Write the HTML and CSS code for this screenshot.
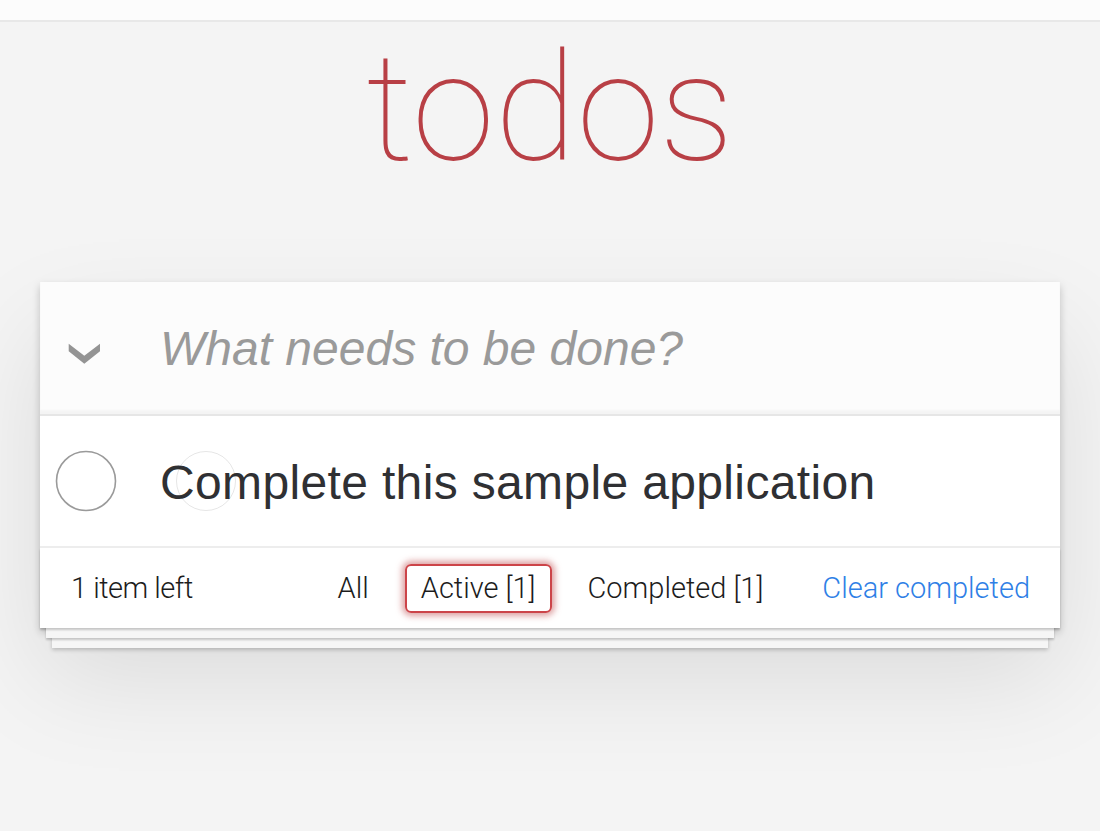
FILE: index.html
```html
<!DOCTYPE html>
<html lang="en">
<head>
<meta charset="utf-8">
<title>TodoMVC</title>
<link rel="stylesheet" href="styles.css">
</head>
<body>
<div class="topbar"></div>
<main class="page">
  <h1 class="title">todos</h1>
  <section class="todoapp">
    <header class="new-row">
      <span class="toggle-all">
        <svg width="32" height="21" viewBox="0 0 32 21"><polygon points="0.7,0.7 16.3,12.7 32,0.7 32,8.3 16.3,20.7 0.7,8.3" fill="#949494"/></svg>
      </span>
      <input class="new-todo" placeholder="What needs to be done?">
    </header>
    <ul class="todo-list">
      <li class="todo">
        <span class="check">
          <svg width="62" height="62" viewBox="0 0 62 62"><circle cx="31" cy="31" r="29.5" fill="none" stroke="#9a9a9a" stroke-width="1.6"/></svg>
        </span>
        <label class="todo-label">Complete this sample application</label>
        <span class="ghost"></span>
      </li>
    </ul>
    <footer class="footer">
      <span class="count">1 item left</span>
      <ul class="filters">
        <li><a class="filter">All</a></li>
        <li><a class="filter selected">Active [1]</a></li>
        <li><a class="filter">Completed [1]</a></li>
      </ul>
      <a class="clear">Clear completed</a>
    </footer>
  </section>
</main>
</body>
</html>
```
FILE: styles.css
```css
html, body {
  margin: 0;
  padding: 0;
}
body {
  background: #f4f4f4;
  font-family: "Liberation Sans", Arial, sans-serif;
  color: #2f3033;
  min-height: 831px;
}
.topbar {
  height: 20px;
  background: #fcfcfc;
  border-bottom: 2px solid #e8e8e8;
}
.page {
  width: 1020px;
  margin: 0 auto;
  padding-top: 12px;
}
.title {
  margin: 0;
  height: 150px;
  font-family: Roboto, "Liberation Sans", sans-serif;
  font-weight: 100;
  font-size: 150px;
  line-height: 150px;
  text-align: center;
  color: #b83f45;
}
.todoapp {
  margin-top: 98px;
  background: #fff;
  box-shadow: 0 4px 8px 0 rgba(0,0,0,0.2), 0 50px 100px 0 rgba(0,0,0,0.1);
  position: relative;
}
.new-row {
  display: flex;
  align-items: center;
  height: 132px;
  background: #fcfcfc;
  box-shadow: inset 0 -4px 2px rgba(0,0,0,0.03);
}
.toggle-all {
  width: 120px;
  display: flex;
  align-items: center;
  padding-left: 28px;
  box-sizing: border-box;
  margin-top: 10px;
}
.toggle-all svg { display: block; }
.new-todo {
  flex: 1;
  border: 0;
  background: transparent;
  font-family: "Liberation Sans", Arial, sans-serif;
  font-size: 48px;
  font-style: italic;
  padding: 0 32px 0 0;
  margin-top: 0;
  height: 70px;
  outline: none;
}
.new-todo::placeholder {
  color: #9a9a9a;
  font-style: italic;
}
.todo-list {
  list-style: none;
  margin: 0;
  padding: 0;
  border-top: 2px solid #e6e6e6;
}
.todo {
  position: relative;
  display: flex;
  align-items: center;
  height: 130px;
  border-bottom: 2px solid #ededed;
}
.check {
  width: 120px;
  display: flex;
  padding-left: 15px;
  box-sizing: border-box;
}
.check svg { display: block; }
.todo-label {
  font-size: 48px;
  letter-spacing: 0.35px;
  color: #2f3033;
  line-height: 58px;
  padding-top: 4px;
}
.ghost {
  position: absolute;
  left: 136px;
  top: 35px;
  width: 60px;
  height: 60px;
  border: 1.5px solid rgba(0,0,0,0.1);
  border-radius: 50%;
  box-sizing: border-box;
}
.footer {
  position: relative;
  display: grid;
  grid-template-columns: 1fr auto 1fr;
  align-items: center;
  height: 80px;
  padding: 0 30px 0 31px;
  font-family: Roboto, "Liberation Sans", sans-serif;
  font-weight: 300;
  font-size: 29px;
  color: #1c1c1c;
}
.footer::before {
  content: "";
  position: absolute;
  left: 0;
  right: 0;
  bottom: 0;
  height: 80px;
  pointer-events: none;
  box-shadow: 0 2px 2px rgba(0,0,0,0.2),
              0 16px 0 -6px #f6f6f6,
              0 18px 2px -6px rgba(0,0,0,0.2),
              0 32px 0 -12px #f6f6f6,
              0 34px 4px -12px rgba(0,0,0,0.2);
}
.count {
  justify-self: start;
  letter-spacing: -0.5px;
}
.filters {
  display: flex;
  gap: 20px;
  list-style: none;
  margin: 0;
  padding: 0;
}
.filter {
  display: block;
  padding: 6px 14px;
  border: 2px solid transparent;
  border-radius: 6px;
  line-height: 33px;
  color: #1c1c1c;
}
.filter.selected {
  border-color: #cc4449;
  box-shadow: 0 0 6px 3px rgba(205,110,112,0.65);
}
.clear {
  justify-self: end;
  color: #2f7fe6;
}
```
